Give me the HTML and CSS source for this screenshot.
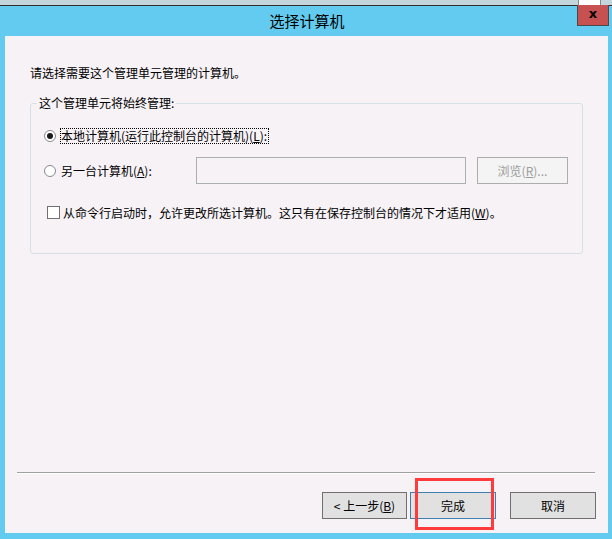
FILE: index.html
```html
<!DOCTYPE html>
<html lang="zh-CN">
<head>
    <meta charset="UTF-8">
    <title>选择计算机</title>
    <link rel="stylesheet" href="styles.css">
</head>
<body>
    <div class="topstrip"><span class="strip-win"></span></div>

    <!-- Title bar -->
    <div class="titlebar">
        <span class="title">选择计算机</span>
        <div class="close">x</div>
    </div>

    <div class="panel">
        <p class="intro">请选择需要这个管理单元管理的计算机。</p>

        <fieldset class="group">
            <legend>这个管理单元将始终管理:</legend>

            <div class="row row-local">
                <span class="radio checked"></span>
                <span class="focus">本地计算机(运行此控制台的计算机)(<u>L</u>):</span>
            </div>

            <div class="row row-other">
                <span class="radio"></span>
                <span class="label-other">另一台计算机(<u>A</u>):</span>
                <input class="name-input" type="text" disabled>
                <button class="browse" disabled>浏览(<u>R</u>)...</button>
            </div>

            <div class="row row-check">
                <span class="checkbox"></span>
                <span>从命令行启动时，允许更改所选计算机。这只有在保存控制台的情况下才适用(<u>W</u>)。</span>
            </div>
        </fieldset>

        <!-- Wizard buttons -->
        <div class="footer">
            <div class="separator"></div>
            <div class="buttons">
                <button class="btn btn-back">&lt; 上一步(<u>B</u>)</button>
                <button class="btn btn-finish">完成</button>
                <button class="btn btn-cancel">取消</button>
            </div>
        </div>

        <div class="mark"></div>
    </div>
</body>
</html>
```

FILE: styles.css
```css
body {
    margin: 0;
    background-color: #63cbef;
    font-family: "Noto Sans CJK SC", "Liberation Sans", sans-serif;
    font-size: 12px;
    color: #000;
}
.topstrip {
    height: 5px;
    background-color: #c4d5dc;
    border-bottom: 1px solid #2d2d2d;
    position: relative;
}
.strip-win {
    position: absolute;
    left: 578px;
    top: 0;
    width: 21px;
    height: 5px;
    background-color: #fff;
    border-left: 1px solid #888;
    border-right: 1px solid #888;
}
.titlebar {
    position: relative;
    height: 30px;
    display: flex;
    align-items: center;
    justify-content: center;
}
.title {
    font-size: 15px;
    line-height: 18px;
    margin-left: 2px;
    margin-top: -1px;
}
.close {
    position: absolute;
    left: 577px;
    top: -1px;
    width: 32px;
    height: 21px;
    box-sizing: border-box;
    background-color: #c75050;
    border: 1px solid #4a4a4a;
    border-top: none;
    color: #000;
    font-family: "DejaVu Sans", sans-serif;
    font-weight: bold;
    font-size: 13px;
    line-height: 18px;
    text-align: center;
}
.panel {
    position: relative;
    margin: 0 4px 0 5px;
    height: 497px;
    background-color: #f6f2f6;
    display: flex;
    flex-direction: column;
}
.intro {
    margin: 29px 0 0 25px;
    line-height: 16px;
}
.group {
    margin: 14px 0 0 25px;
    width: 553px;
    box-sizing: border-box;
    padding: 0 0 33px 0;
    border: 1px solid #d6e0e7;
    border-radius: 3px;
    min-width: 0;
}
.group legend {
    margin-left: 6px;
    padding: 0 2px;
    line-height: 16px;
}
.row {
    display: flex;
    align-items: center;
    padding-left: 13px;
}
.row-local {
    margin-top: 17px;
    height: 16px;
}
.row-other {
    margin-top: 13px;
    height: 27px;
}
.row-check {
    margin-top: 20px;
    height: 16px;
}
.radio {
    width: 10px;
    height: 10px;
    border: 1px solid #8a8a8a;
    border-radius: 50%;
    background-color: #fff;
    position: relative;
    margin-right: 4px;
}
.radio.checked::after {
    content: "";
    position: absolute;
    left: 2px;
    top: 2px;
    width: 6px;
    height: 6px;
    border-radius: 50%;
    background-color: #1a1a1a;
}
.focus {
    border: 1px dotted #000;
    line-height: 14px;
    padding-right: 1px;
}
.label-other {
    width: 135px;
    margin-left: 1px;
}
.name-input {
    width: 270px;
    height: 27px;
    box-sizing: border-box;
    margin: 0;
    border: 1px solid #abafb2;
    background-color: #f6f2f6;
}
.browse {
    margin-left: 11px;
    width: 91px;
    height: 27px;
    padding: 0;
    border: 1px solid #adadad;
    background-color: #f4f4f4;
    color: #9c9c9c;
    font-family: inherit;
    font-size: 12px;
}
.checkbox {
    width: 11px;
    height: 11px;
    border: 1px solid #707070;
    background-color: #fff;
    margin: 0 3px 0 3px;
}
.footer {
    margin-top: auto;
}
.separator {
    margin: 0 13px 0 12px;
    height: 1px;
    background-color: #a0a0a0;
    border-bottom: 1px solid #fff;
}
.buttons {
    display: flex;
    justify-content: flex-end;
    margin: 18px 12px 14px 0;
}
.btn {
    height: 27px;
    padding: 0;
    background-color: #e1e1e1;
    border: 1px solid #707070;
    font-family: inherit;
    font-size: 12px;
    color: #000;
}
.btn-back {
    width: 85px;
}
.btn-finish {
    width: 86px;
    margin-left: 3px;
    border-color: #3c7fb1;
}
.btn-cancel {
    width: 86px;
    margin-left: 14px;
}
.mark {
    position: absolute;
    left: 410px;
    top: 442px;
    width: 79px;
    height: 52px;
    box-sizing: border-box;
    border: 3px solid #ff3b3b;
}
```
